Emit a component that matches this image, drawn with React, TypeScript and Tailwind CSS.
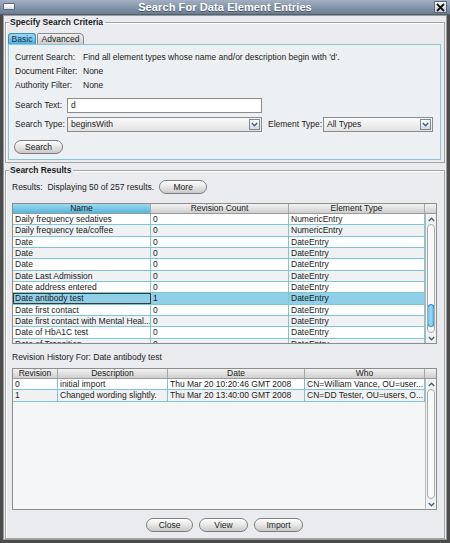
import React from "react"

type Col = { title: string; w: string; active?: boolean }

const grid = "border-[#7cc6d6]"

function Chevron({ up }: { up?: boolean }) {
  return (
    <svg width="7" height="5" viewBox="0 0 7 5" className="block">
      <path
        d={up ? "M0.8 4 L3.5 1.2 L6.2 4" : "M0.8 1 L3.5 3.8 L6.2 1"}
        fill="none"
        stroke="#3f5f80"
        strokeWidth="1.3"
      />
    </svg>
  )
}

function Pill({ label, w }: { label: string; w: string }) {
  return (
    <div
      className={`${w} h-[14px] rounded-full border border-[#7d7d7d] bg-gradient-to-b from-[#fdfdfd] via-[#e6e6e6] to-[#c9c9c9] flex items-center justify-center leading-none text-[#222] shadow-[inset_0_1px_0_#fff]`}
    >
      {label}
    </div>
  )
}

function Combo({ value, w }: { value: string; w: string }) {
  return (
    <div className={`${w} shrink-0 h-[15px] border border-[#8c8c8c] bg-gradient-to-b from-[#fbfbfb] to-[#e2e2e2] flex items-center`}>
      <span className="flex-1 pl-[3px] leading-none">{value}</span>
      <div className="w-[11px] h-[11px] mr-px border border-[#7a8a9a] bg-gradient-to-b from-[#ffffff] to-[#d2dae2] flex items-center justify-center">
        <Chevron />
      </div>
    </div>
  )
}

function Scroll({ thumbTop }: { thumbTop?: number }) {
  return (
    <div className="w-[11px] shrink-0 flex flex-col bg-[#f1f2f3] border-l border-[#b8b8b8]">
      <div className="h-[10px] flex items-center justify-center">
        <Chevron up />
      </div>
      <div className="flex-1 mx-px rounded-full border border-[#a9a9a9] bg-[#f8f8f8] flex flex-col overflow-hidden">
        {thumbTop !== undefined && (
          <>
            <div style={{ height: thumbTop }} />
            <div className="h-[23px] -mx-px rounded-full border border-[#2f7fb0] bg-gradient-to-r from-[#6ec2ec] via-[#9fd9f6] to-[#4aa6db]" />
          </>
        )}
      </div>
      <div className="h-[10px] flex items-center justify-center">
        <Chevron />
      </div>
    </div>
  )
}

function Table({
  cols,
  rows,
  selected,
  height,
  thumbTop,
}: {
  cols: Col[]
  rows: string[][]
  selected?: number
  height: string
  thumbTop?: number
}) {
  return (
    <div className={`${height} border border-[#8d8d8d] bg-[#f4f6f8] flex flex-col overflow-hidden`}>
      <div className="h-[10px] flex border-b border-[#9a9a9a] shrink-0">
        {cols.map((c, i) => (
          <div
            key={i}
            className={`${c.w} shrink-0 border-r border-[#a8a8a8] flex items-center justify-center leading-none ${
              c.active
                ? "bg-gradient-to-b from-[#9bdaf3] to-[#55b4dc]"
                : "bg-gradient-to-b from-[#f2f2f2] to-[#cfcfcf]"
            }`}
          >
            {c.title}
          </div>
        ))}
        <div className="w-[11px] shrink-0 bg-gradient-to-b from-[#f2f2f2] to-[#cfcfcf]" />
      </div>
      <div className="flex-1 flex min-h-0">
        <div className="flex-1 min-w-0 overflow-hidden">
          {rows.map((r, i) => (
            <div
              key={i}
              className={`h-[11.33px] flex border-b ${grid} ${
                i === selected ? "bg-[#8fd0e8]" : i % 2 ? "bg-[#eff1f3]" : "bg-white"
              }`}
            >
              {cols.map((c, j) => (
                <div
                  key={j}
                  className={`${c.w} shrink-0 min-w-0 border-r ${grid} pl-[2px] flex items-center leading-none whitespace-nowrap overflow-hidden ${
                    i === selected && j === 0 ? "outline outline-1 -outline-offset-1 outline-[#3a3a3a]" : ""
                  }`}
                >
                  {r[j]}
                </div>
              ))}
            </div>
          ))}
        </div>
        <Scroll thumbTop={thumbTop} />
      </div>
    </div>
  )
}

const results = [
  ["Daily frequency sedatives", "0", "NumericEntry"],
  ["Daily frequency tea/coffee", "0", "NumericEntry"],
  ["Date", "0", "DateEntry"],
  ["Date", "0", "DateEntry"],
  ["Date", "0", "DateEntry"],
  ["Date Last Admission", "0", "DateEntry"],
  ["Date address entered", "0", "DateEntry"],
  ["Date antibody test", "1", "DateEntry"],
  ["Date first contact", "0", "DateEntry"],
  ["Date first contact with Mental Heal...", "0", "DateEntry"],
  ["Date of HbA1C test", "0", "DateEntry"],
  ["Date of Transition", "0", "DateEntry"],
]

const history = [
  ["0", "initial import", "Thu Mar 20 10:20:46 GMT 2008", "CN=William Vance, OU=user..."],
  ["1", "Changed wording slightly.", "Thu Mar 20 13:40:00 GMT 2008", "CN=DD Tester, OU=users, O..."],
]

export default function App() {
  return (
    <div className="w-[450px] h-[543px] bg-[#4b4b4b] flex flex-col overflow-hidden font-['Liberation_Sans',Arial,sans-serif] text-[8.5px] text-[#1b1b1b]">
      {/* title bar */}
      <div className="h-[15px] shrink-0 relative bg-gradient-to-b from-[#a2b0c2] to-[#6a7c93] border-b border-[#4e5d70] flex items-center justify-center">
        <div className="absolute left-[3px] top-[3px] w-[12px] h-[7px] rounded-[1px] border border-[#5a6a7a] bg-gradient-to-b from-white to-[#d8dde3]" />
        <span className="text-white font-bold text-[11px] leading-none tracking-[0.1px] [text-shadow:0_1px_0_#46566a]">
          Search For Data Element Entries
        </span>
        <div className="absolute right-[3px] top-[1px] w-[13px] h-[12px] border border-[#5b6a7c] bg-gradient-to-b from-[#f4f6f8] to-[#c9d1da] flex items-center justify-center">
          <svg width="9" height="9" viewBox="0 0 9 9">
            <path d="M1 1 L8 8 M8 1 L1 8" stroke="#111" strokeWidth="1.8" />
          </svg>
        </div>
      </div>

      {/* body */}
      <div className="flex-1 mx-[3px] mb-[3px] border border-[#9c9c9c] bg-[#e9ebee] px-px pt-px flex flex-col">
        <fieldset className="border border-[#a3a3a3] shadow-[inset_1px_1px_0_#fff]">
          <legend className="ml-[3px] pl-px pr-[2px] font-bold text-[8.5px] leading-[10px]">Specify Search Criteria</legend>
          <div className="pl-[2px] pr-[3px] pb-[2px]">
            <div className="mt-[6px] flex items-end h-[11px]">
              <div className="w-[28px] h-[11px] rounded-t-[3px] border border-b-0 border-[#3d8fb6] bg-gradient-to-b from-[#9ad8f2] to-[#4faedb] flex items-center justify-center leading-none text-[#16344f]">
                Basic
              </div>
              <div className="ml-px w-[47px] h-[11px] rounded-tr-[5px] rounded-tl-[2px] border border-b-0 border-[#8a8a8a] bg-gradient-to-b from-[#f1f1f1] to-[#cdcdcd] flex items-center justify-center leading-none">
                Advanced
              </div>
            </div>
            <div className="h-[116px] border border-[#86c6d8] bg-[#edf0f2] pl-[6px] pt-[5px] whitespace-nowrap">
              <div className="h-[14px] flex items-center">
                <span className="w-[68px] shrink-0">Current Search:</span>
                <span>Find all element types whose name and/or description begin with 'd'.</span>
              </div>
              <div className="h-[14px] flex items-center">
                <span className="w-[68px] shrink-0">Document Filter:</span>
                <span>None</span>
              </div>
              <div className="h-[14px] flex items-center">
                <span className="w-[68px] shrink-0">Authority Filter:</span>
                <span>None</span>
              </div>
              <div className="mt-[6px] h-[15px] flex items-center">
                <span className="w-[52px] shrink-0">Search Text:</span>
                <div className="w-[195px] h-[15px] border border-[#8c8c8c] bg-white pl-[3px] flex items-center leading-none">d</div>
              </div>
              <div className="mt-[4px] h-[15px] flex items-center">
                <span className="w-[52px] shrink-0">Search Type:</span>
                <Combo value="beginsWith" w="w-[195px]" />
                <span className="ml-[6px] w-[55px] shrink-0">Element Type:</span>
                <Combo value="All Types" w="w-[110px]" />
              </div>
              <div className="mt-[8px] -ml-px">
                <Pill label="Search" w="w-[49px]" />
              </div>
            </div>
          </div>
        </fieldset>

        <fieldset className="mt-[2px] flex-1 border border-[#a3a3a3] shadow-[inset_1px_1px_0_#fff]">
          <legend className="ml-[3px] pl-px pr-[2px] font-bold text-[8.5px] leading-[10px]">Search Results</legend>
          <div className="pl-[6px] pr-[7px]">
            <div className="mt-[5px] h-[14px] flex items-center whitespace-nowrap">
              <span>Results:&nbsp;&nbsp;Displaying 50 of 257 results.</span>
              <div className="ml-[5px]">
                <Pill label="More" w="w-[48px]" />
              </div>
            </div>
            <div className="mt-[9px]">
              <Table
                height="h-[141px]"
                cols={[
                  { title: "Name", w: "w-[138px]", active: true },
                  { title: "Revision Count", w: "w-[138px]" },
                  { title: "Element Type", w: "w-[136px]" },
                ]}
                rows={results}
                selected={7}
                thumbTop={79}
              />
            </div>
            <div className="mt-[6px] h-[14px] flex items-center">Revision History For: Date antibody test</div>
            <div className="mt-[4px]">
              <Table
                height="h-[142px]"
                cols={[
                  { title: "Revision", w: "w-[45px]" },
                  { title: "Description", w: "w-[110px]" },
                  { title: "Date", w: "w-[137px]" },
                  { title: "Who", w: "w-[120px]" },
                ]}
                rows={history}
              />
            </div>
            <div className="mt-[8px] flex justify-center gap-[6px]">
              <Pill label="Close" w="w-[47px]" />
              <Pill label="View" w="w-[49px]" />
              <Pill label="Import" w="w-[49px]" />
            </div>
          </div>
        </fieldset>
      </div>
    </div>
  )
}
